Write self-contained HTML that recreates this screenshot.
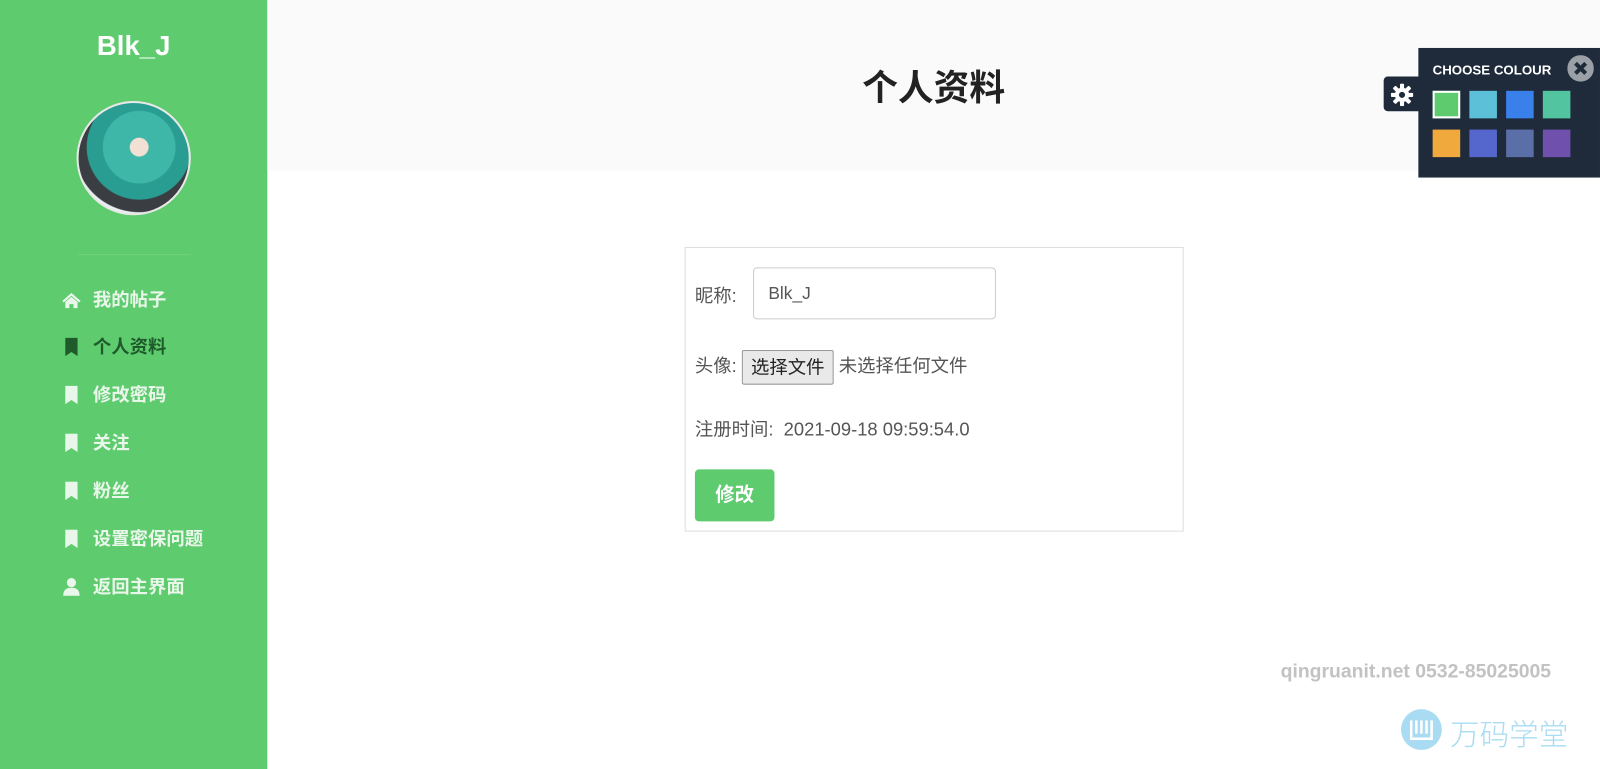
<!DOCTYPE html>
<html><head><meta charset="utf-8"><style>
*{margin:0;padding:0;box-sizing:border-box}
html,body{width:1600px;height:769px;overflow:hidden;background:#fff}
#w{position:absolute;left:0;top:0;width:1568px;height:754px;transform:scale(1.0204);transform-origin:0 0;font-family:"Liberation Sans","Noto Sans CJK SC",sans-serif}
.side{position:absolute;left:0;top:0;width:262px;height:754px;background:#5fcb6f}
.name{position:absolute;left:0;width:262px;top:30px;text-align:center;color:#fff;font-weight:bold;font-size:27px}
.av{position:absolute;left:75px;top:99px;width:112px;height:112px;border-radius:50%;background:radial-gradient(circle at 55% 40%,#f3e0d4 0 10%,#3fb7a8 11% 40%,#2a9d92 41% 58%,#3a3d42 59% 72%,#e9eef0 73%);border:2px solid #e8e8e8}
.hr{position:absolute;left:76px;top:249px;width:111px;height:1px;background:#6fd27e}
.m{position:absolute;left:60px;height:24px;line-height:24px;font-size:18px;font-weight:bold;color:#e9f7ea}
.m svg{position:absolute;left:0;top:3px}
.m span{position:absolute;left:31px;white-space:nowrap}
.m.a{color:#1f5a2b}
.head{position:absolute;left:262px;top:0;width:1338px;height:167px;background:#fafafa}
.head h1{position:absolute;left:0;width:1306px;top:58px;text-align:center;font-size:35px;color:#222}
.box{position:absolute;left:671px;top:242px;width:489px;height:279px;border:1px solid #ddd;color:#555;font-size:18px}
.box .l{position:absolute;left:9px;white-space:nowrap}
.inp{position:absolute;left:66px;top:19px;width:238px;height:51px;border:1px solid #ccc;border-radius:4px;padding-left:14px;line-height:50px;font-size:17px;color:#555}
.fb{display:inline-block;border:1px solid #999;background:#e9e9e9;color:#222;padding:0 8px;height:34px;line-height:32px;border-radius:2px;vertical-align:middle}
.btn{position:absolute;left:9px;top:217px;width:78px;height:51px;background:#5fcb6f;border-radius:4px;color:#fff;font-weight:bold;font-size:19px;text-align:center;line-height:51px}
.cp{position:absolute;left:1390px;top:47px;width:178px;height:127px;background:#1f2b3b}
.gear{position:absolute;left:1356px;top:75px;width:36px;height:34px;background:#1f2b3b;border-radius:4px 0 0 4px}
.cp .t{position:absolute;left:14px;top:14px;color:#fff;font-weight:bold;font-size:13px}
.sw{position:absolute;width:27px;height:27px}
.wm{position:absolute;left:1255px;top:648px;color:#c2c2c2;font-weight:bold;font-size:19px}
</style></head><body><div id="w">
<div class="side">
<div class="name">Blk_J</div>
<div class="av"></div>
<div class="hr"></div>
<div class="m" style="top:282px"><svg width="20" height="18" viewBox="0 0 20 18"><path d="M10 2L1 10l1.5 1.5L10 5l7.5 6.5L19 10z M4 11v6h4v-4h4v4h4v-6l-6-5z" fill="#e9f7ea"/></svg><span>我的帖子</span></div>
<div class="m a" style="top:328px"><svg width="20" height="18" viewBox="0 0 20 18"><path d="M4 0h12v18l-6-4-6 4z" fill="#1f5a2b"/></svg><span>个人资料</span></div>
<div class="m" style="top:375px"><svg width="20" height="18" viewBox="0 0 20 18"><path d="M4 0h12v18l-6-4-6 4z" fill="#e9f7ea"/></svg><span>修改密码</span></div>
<div class="m" style="top:422px"><svg width="20" height="18" viewBox="0 0 20 18"><path d="M4 0h12v18l-6-4-6 4z" fill="#e9f7ea"/></svg><span>关注</span></div>
<div class="m" style="top:469px"><svg width="20" height="18" viewBox="0 0 20 18"><path d="M4 0h12v18l-6-4-6 4z" fill="#e9f7ea"/></svg><span>粉丝</span></div>
<div class="m" style="top:516px"><svg width="20" height="18" viewBox="0 0 20 18"><path d="M4 0h12v18l-6-4-6 4z" fill="#e9f7ea"/></svg><span>设置密保问题</span></div>
<div class="m" style="top:563px"><svg width="20" height="18" viewBox="0 0 20 18"><circle cx="10" cy="5" r="4.5" fill="#e9f7ea"/><path d="M2 18c0-6 3-8 8-8s8 2 8 8z" fill="#e9f7ea"/></svg><span>返回主界面</span></div>
</div>
<div class="head"><h1>个人资料</h1></div>
<div class="box">
<div class="l" style="top:33px">昵称:</div>
<div class="inp">Blk_J</div>
<div class="l" style="top:100px">头像: <span class="fb">选择文件</span> 未选择任何文件</div>
<div class="l" style="top:164px">注册时间:&nbsp; 2021-09-18 09:59:54.0</div>
<div class="btn">修改</div>
</div>
<div class="gear"><svg style="position:absolute;left:7px;top:7px" width="22" height="22" viewBox="0 0 22 22"><g fill="#fff"><circle cx="11" cy="11" r="7"/><rect x="9" y="0" width="4" height="22" rx="1"/><rect x="0" y="9" width="22" height="4" rx="1"/><rect x="9" y="0" width="4" height="22" rx="1" transform="rotate(45 11 11)"/><rect x="9" y="0" width="4" height="22" rx="1" transform="rotate(-45 11 11)"/></g><circle cx="11" cy="11" r="3" fill="#1f2b3b"/></svg></div>
<div class="cp">
<div class="t">CHOOSE COLOUR</div>
<svg style="position:absolute;left:146px;top:7px" width="26" height="26" viewBox="0 0 26 26"><circle cx="13" cy="13" r="13" fill="#9aa0a6"/><path d="M8 8l10 10M18 8L8 18" stroke="#1f2b3b" stroke-width="4"/></svg>
<div class="sw" style="left:14px;top:42px;background:#5fcb6f;border:2px solid #fff"></div>
<div class="sw" style="left:50px;top:42px;background:#5bc0d8"></div>
<div class="sw" style="left:86px;top:42px;background:#3a80ea"></div>
<div class="sw" style="left:122px;top:42px;background:#52c5a0"></div>
<div class="sw" style="left:14px;top:80px;background:#efa93c"></div>
<div class="sw" style="left:50px;top:80px;background:#5566cc"></div>
<div class="sw" style="left:86px;top:80px;background:#5a6ea8"></div>
<div class="sw" style="left:122px;top:80px;background:#7050ad"></div>
</div>
<div class="wm">qingruanit.net 0532-85025005</div>
<svg style="position:absolute;left:1372px;top:694px" width="42" height="42" viewBox="0 0 42 42"><circle cx="21" cy="21" r="20" fill="#a9dcf2"/><path d="M11 12v18h20V12M16 12v13M21 12v13M26 12v13" stroke="#fff" stroke-width="2.5" fill="none"/></svg>
<div style="position:absolute;left:1421px;top:697px;color:#a9dcf2;font-size:29px;font-family:'Noto Sans CJK SC',sans-serif;font-weight:300">万码学堂</div>
</div></body></html>
